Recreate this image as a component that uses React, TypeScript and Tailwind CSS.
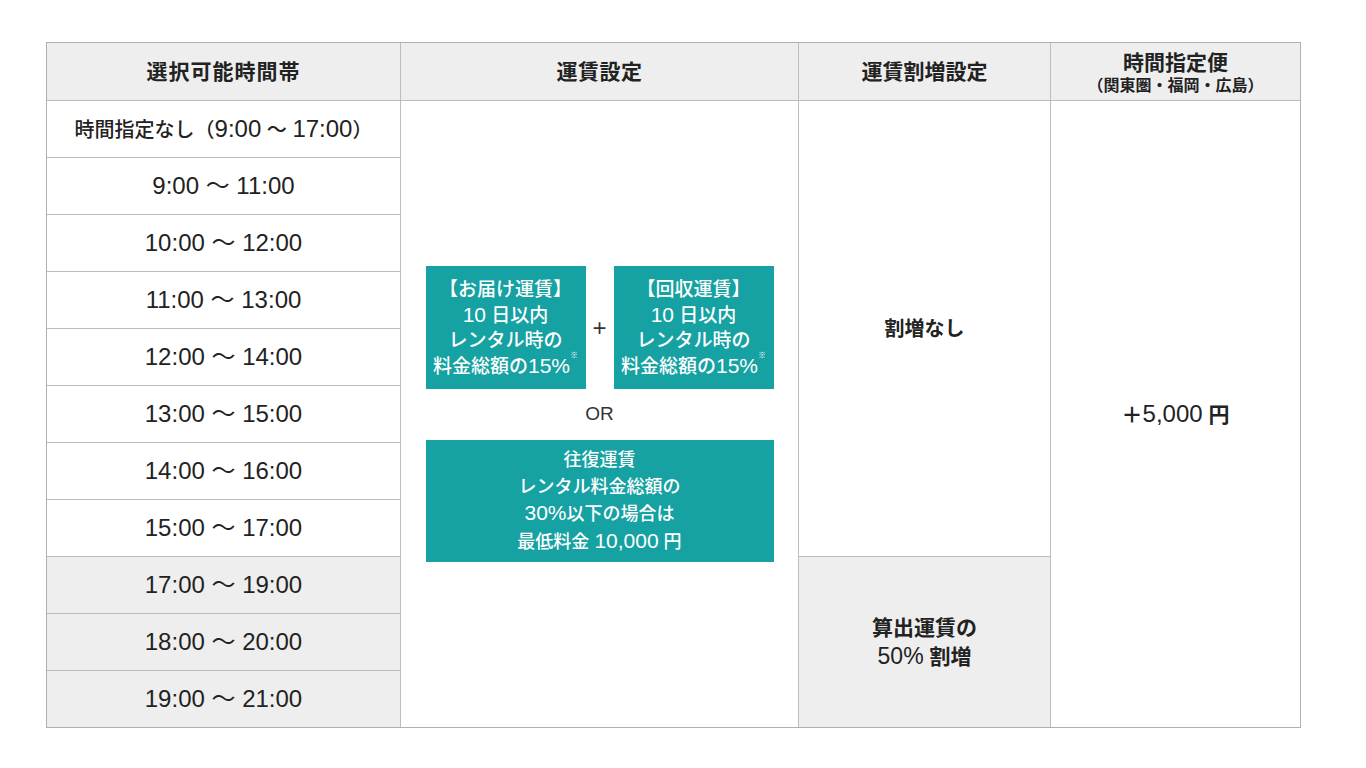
import React from 'react'

const font = { fontFamily: '"Liberation Sans", "Noto Sans CJK JP", "Noto Sans", sans-serif' }

// latin digits in the reference run larger than the kana around them
function Num({ text, cls }: { text: string; cls: string }) {
  return (
    <span className="whitespace-pre">
      {text.split(/(\d[\d:,%]*)/).map((part, i) =>
        i % 2 ? (
          <span key={i} className={cls}>
            {part}
          </span>
        ) : (
          part
        ),
      )}
    </span>
  )
}

const slots = [
  { label: '9:00 ～ 11:00', gray: false },
  { label: '10:00 ～ 12:00', gray: false },
  { label: '11:00 ～ 13:00', gray: false },
  { label: '12:00 ～ 14:00', gray: false },
  { label: '13:00 ～ 15:00', gray: false },
  { label: '14:00 ～ 16:00', gray: false },
  { label: '15:00 ～ 17:00', gray: false },
  { label: '17:00 ～ 19:00', gray: true },
  { label: '18:00 ～ 20:00', gray: true },
  { label: '19:00 ～ 21:00', gray: true },
]

function FareBox({ title }: { title: string }) {
  return (
    <div className="w-[160px] h-[123px] bg-[#16a1a3] text-white flex flex-col items-center justify-center text-[19px] leading-[25px] font-medium">
      <span>{title}</span>
      <span>
        <Num text="10 日以内" cls="text-[21px]" />
      </span>
      <span>レンタル時の</span>
      <span className="whitespace-nowrap">
        <Num text="料金総額の15%" cls="text-[21px]" />
        <sup className="text-[8px] align-top relative top-[3px]">※</sup>
      </span>
    </div>
  )
}

export default function App() {
  return (
    <div className="w-[1366px] h-[768px] bg-white pt-[42px] pl-[46px] text-[#222]" style={font}>
      <div className="grid grid-cols-[353px_397px_251px_249px] grid-rows-[57px_repeat(11,56px)] gap-px bg-[#bdbdbd] border border-[#b0b0b0] w-[1255px]">
        {/* header */}
        <div className="bg-[#eeeeee] flex items-center justify-center text-[21px] tracking-[1px] font-bold">選択可能時間帯</div>
        <div className="bg-[#eeeeee] flex items-center justify-center text-[21px] tracking-[0.5px] font-bold">運賃設定</div>
        <div className="bg-[#eeeeee] flex items-center justify-center text-[21px] font-bold">運賃割増設定</div>
        <div className="bg-[#eeeeee] flex flex-col items-center justify-center font-bold pt-[2px]">
          <span className="text-[21px] leading-[25px]">時間指定便</span>
          <span className="text-[16px] leading-[21px]">（関東圏・福岡・広島）</span>
        </div>

        {/* time slots */}
        <div className="col-start-1 row-start-2 bg-white flex items-center justify-center text-[20px] font-medium whitespace-nowrap">
          <Num text="時間指定なし（9:00 ～ 17:00）" cls="text-[24px] font-normal" />
        </div>
        {slots.map((s, i) => (
          <div
            key={i}
            className={`col-start-1 flex items-center justify-center text-[24px] ${
              s.gray ? 'bg-[#eeeeee]' : 'bg-white'
            }`}
            style={{ gridRowStart: i + 3 }}
          >
            {s.label}
          </div>
        ))}

        {/* fares */}
        <div className="col-start-2 row-start-2 row-end-13 bg-white flex flex-col items-center justify-center">
          <div className="flex items-center">
            <FareBox title="【お届け運賃】" />
            <span className="w-[28px] text-center text-[24px] font-light leading-none text-[#333]">+</span>
            <FareBox title="【回収運賃】" />
          </div>
          <div className="h-[51px] flex items-center justify-center text-[19px] text-[#333]">OR</div>
          <div className="w-[348px] h-[122px] bg-[#16a1a3] text-white flex flex-col items-center justify-center text-[18px] leading-[26.5px] font-medium">
            <span>往復運賃</span>
            <span>レンタル料金総額の</span>
            <span>
              <Num text="30%以下の場合は" cls="text-[21px]" />
            </span>
            <span>
              <Num text="最低料金 10,000 円" cls="text-[21px]" />
            </span>
          </div>
        </div>

        {/* surcharge */}
        <div className="col-start-3 row-start-2 row-end-10 bg-white flex items-center justify-center text-[20px] font-bold">
          割増なし
        </div>
        <div className="col-start-3 row-start-10 row-end-13 bg-[#eeeeee] flex flex-col items-center justify-center text-[21px] leading-[29px] font-bold">
          <span>算出運賃の</span>
          <span>
            <Num text="50% 割増" cls="text-[23px] font-normal" />
          </span>
        </div>

        {/* time-designated delivery */}
        <div className="col-start-4 row-start-2 row-end-13 bg-white flex items-center justify-center text-[21px] font-bold">
          <Num text="＋5,000 円" cls="text-[24px] font-normal" />
        </div>
      </div>
    </div>
  )
}
